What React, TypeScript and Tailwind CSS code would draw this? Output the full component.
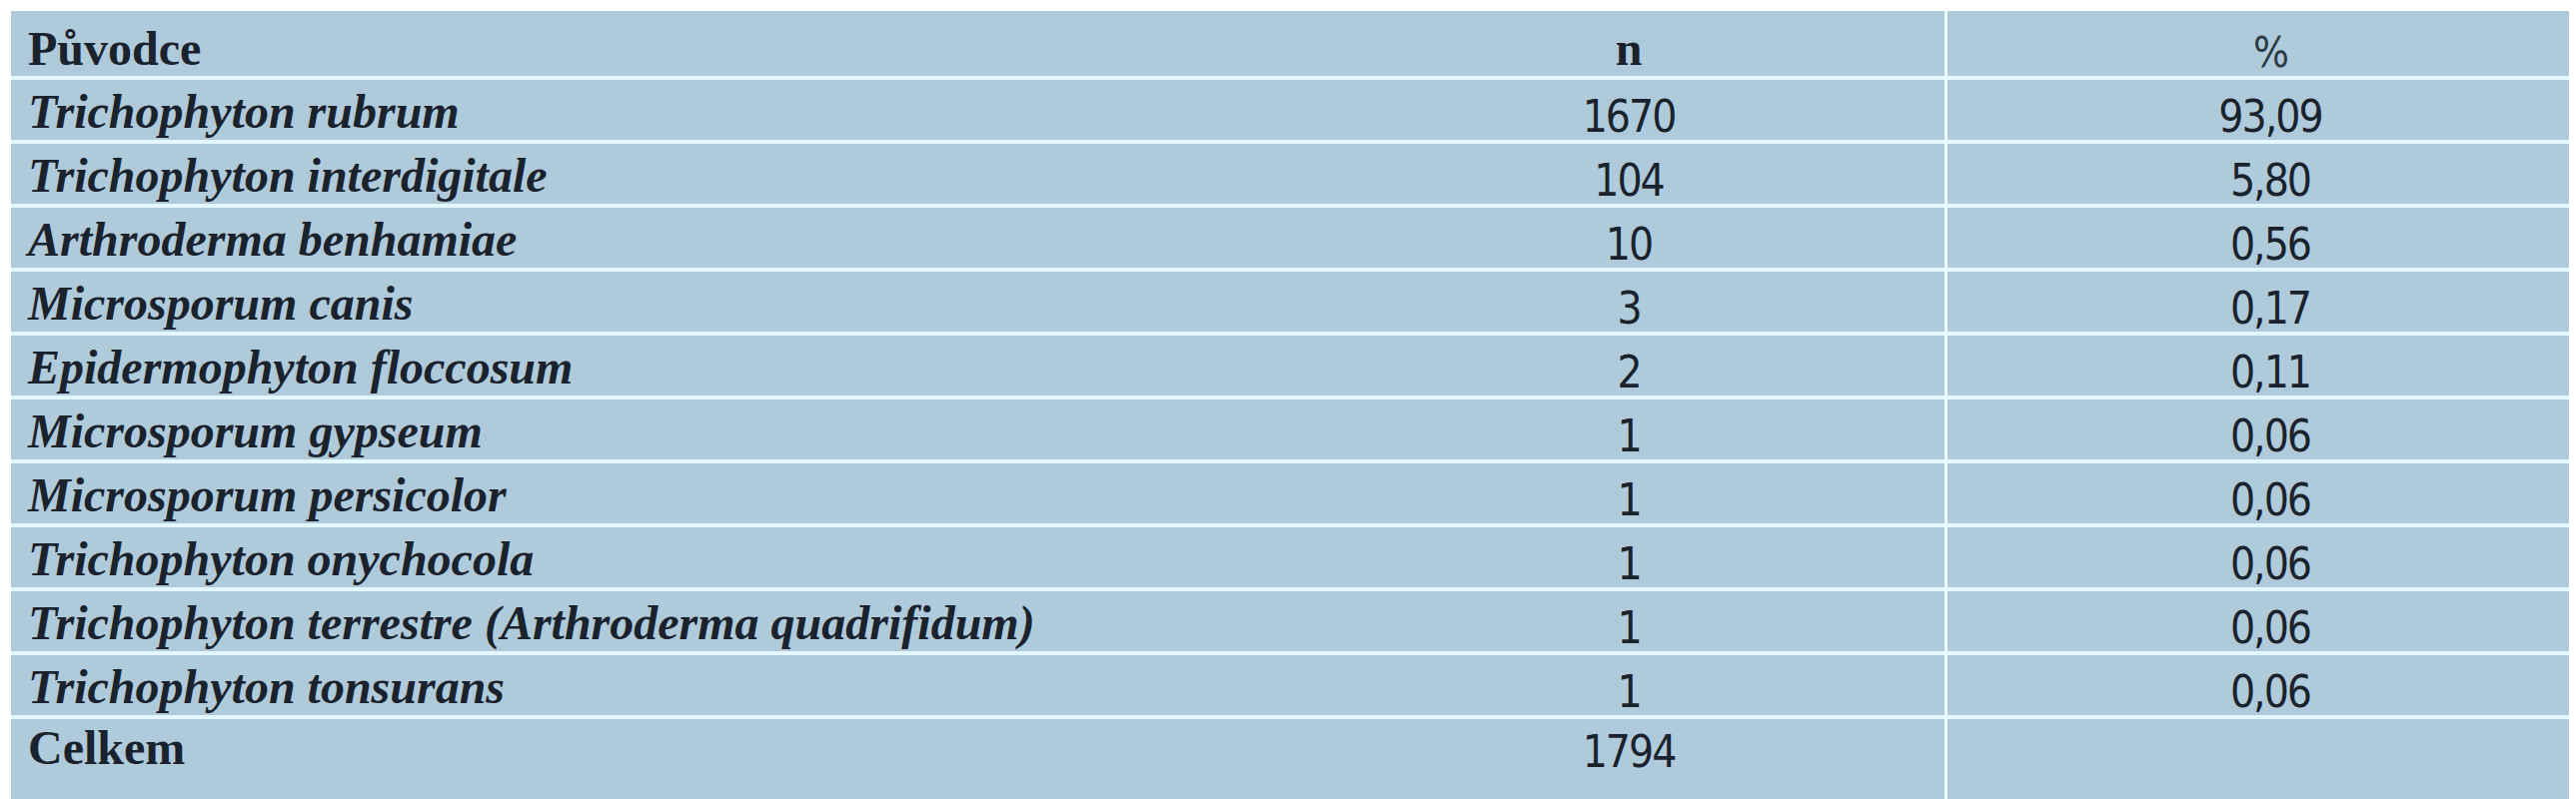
import React from 'react';

type Row = {
  name: string;
  n: string;
  pct: string;
};

const rows: Row[] = [
  { name: 'Trichophyton rubrum', n: '1670', pct: '93,09' },
  { name: 'Trichophyton interdigitale', n: '104', pct: '5,80' },
  { name: 'Arthroderma benhamiae', n: '10', pct: '0,56' },
  { name: 'Microsporum canis', n: '3', pct: '0,17' },
  { name: 'Epidermophyton floccosum', n: '2', pct: '0,11' },
  { name: 'Microsporum gypseum', n: '1', pct: '0,06' },
  { name: 'Microsporum persicolor', n: '1', pct: '0,06' },
  { name: 'Trichophyton onychocola', n: '1', pct: '0,06' },
  { name: 'Trichophyton terrestre (Arthroderma quadrifidum)', n: '1', pct: '0,06' },
  { name: 'Trichophyton tonsurans', n: '1', pct: '0,06' },
];

const serif = "font-['Liberation_Serif','Times_New_Roman',serif]";
const numFont =
  "font-['DejaVu_Sans_Condensed','DejaVu_Sans',sans-serif] font-stretch-condensed tracking-[-2px]";

export default function App() {
  return (
    <div className="min-h-screen bg-white pl-[11px] pt-[11px]">
      <div className="w-[2560px] bg-[#afcadb] text-[#1a232d]">
        {/* header */}
        <div className="grid grid-cols-[1303px_632px_625px] h-[69px] border-b-4 border-[#e4f9ff]">
          <div className={`${serif} font-bold text-[48px] leading-none pl-[17px] pt-[14px]`}>Původce</div>
          <div className={`${serif} font-bold text-[48px] leading-none text-center pt-[14px]`}>n</div>
          <div className={`${numFont} text-[42px] leading-none text-center pt-[21px] pl-[24px] border-l-[3px] border-[#eefbff] text-[#2d3b47]`}>
            %
          </div>
        </div>

        {/* data rows */}
        {rows.map((r) => (
          <div
            key={r.name}
            className="grid grid-cols-[1303px_632px_625px] h-[64px] border-b-4 border-[#e4f9ff]"
          >
            <div className={`${serif} font-bold italic text-[48px] leading-none pl-[17px] pt-[8px] whitespace-nowrap`}>
              {r.name}
            </div>
            <div className={`${numFont} text-[44px] leading-none text-center pt-[15px]`}>{r.n}</div>
            <div className={`${numFont} text-[44px] leading-none text-center pt-[15px] pl-[24px] border-l-[3px] border-[#eefbff]`}>
              {r.pct}
            </div>
          </div>
        ))}

        {/* total */}
        <div className="grid grid-cols-[1303px_632px_625px] h-[100px]">
          <div className={`${serif} font-bold text-[48px] leading-none pl-[17px] pt-[5px]`}>Celkem</div>
          <div className={`${numFont} text-[44px] leading-none text-center pt-[11px]`}>1794</div>
          <div className="border-l-[3px] border-[#eefbff]" />
        </div>
      </div>
    </div>
  );
}
